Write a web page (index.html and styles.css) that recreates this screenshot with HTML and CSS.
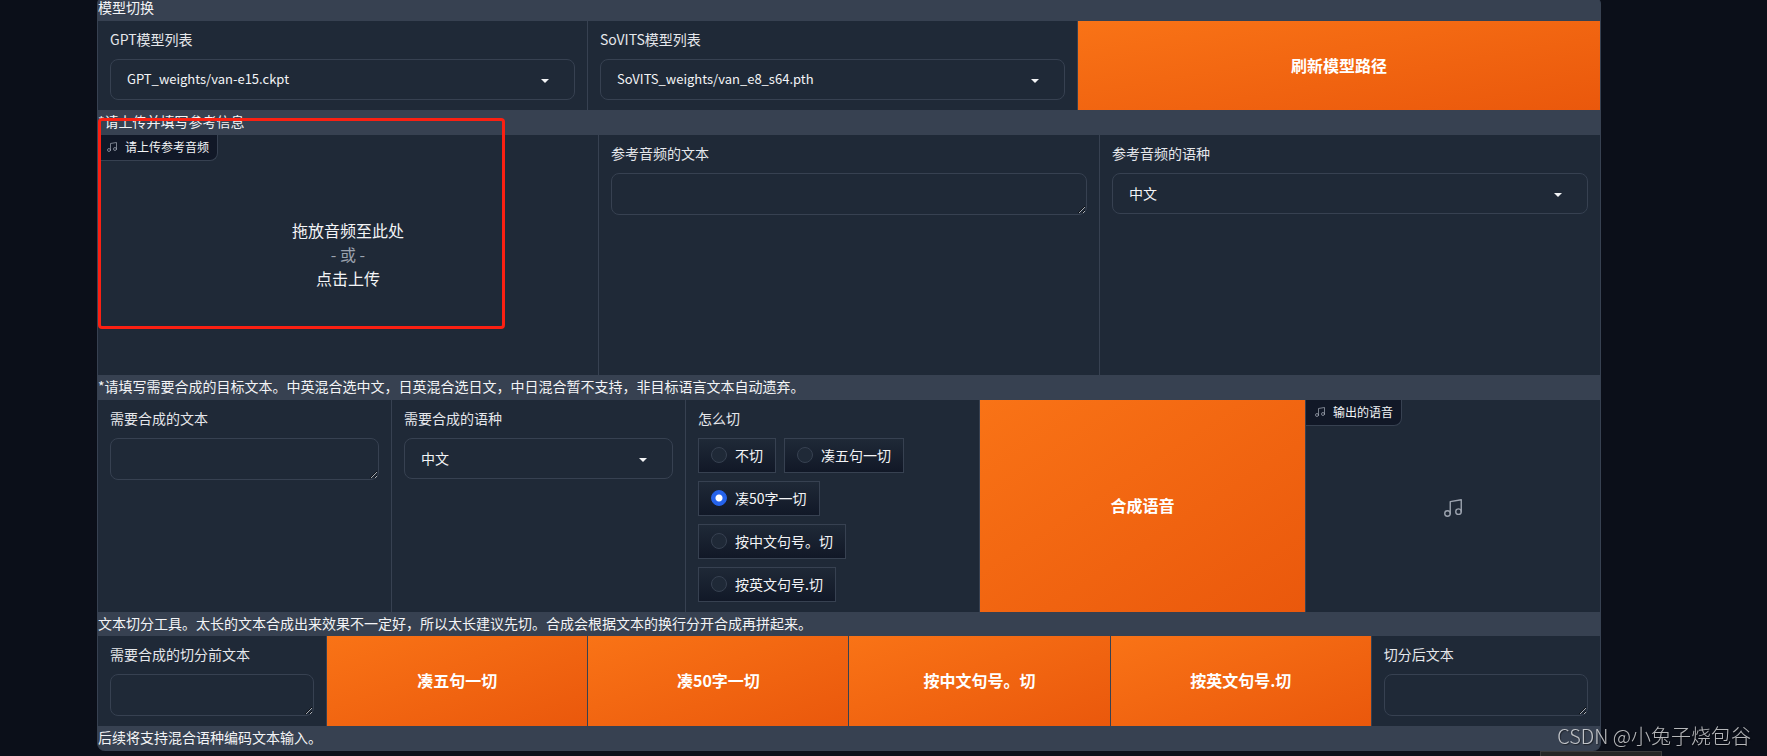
FILE: index.html
```html
<!DOCTYPE html>
<html lang="zh-CN">
<head>
<meta charset="utf-8">
<title>GPT-SoVITS</title>
<link rel="stylesheet" href="styles.css">
</head>
<body>
<svg class="symbols" aria-hidden="true">
  <symbol id="music" viewBox="0 0 24 24" fill="none" stroke="currentColor" stroke-width="1.5" stroke-linecap="round" stroke-linejoin="round">
    <path d="M9 18V5l12-2v13"/><circle cx="6" cy="18" r="3"/><circle cx="18" cy="16" r="3"/>
  </symbol>
  <symbol id="caret" viewBox="0 0 18 18" fill="currentColor"><path d="M5 8l4 4 4-4z"/></symbol>
</svg>

<main class="panel">
  <h2 class="heading">模型切换</h2>
  <section class="row row-models">
    <div class="block">
      <label class="label" for="gpt">GPT模型列表</label>
      <div class="select"><select id="gpt" class="field latin"><option>GPT_weights/van-e15.ckpt</option></select><svg class="caret"><use href="#caret"/></svg></div>
    </div>
    <div class="block">
      <label class="label" for="sovits">SoVITS模型列表</label>
      <div class="select"><select id="sovits" class="field latin"><option>SoVITS_weights/van_e8_s64.pth</option></select><svg class="caret"><use href="#caret"/></svg></div>
    </div>
    <button class="primary" type="button">刷新模型路径</button>
  </section>

  <h2 class="heading">*请上传并填写参考信息</h2>
  <section class="row row-reference">
    <div class="audio">
      <span class="badge"><svg class="badge-icon"><use href="#music"/></svg>请上传参考音频</span>
      <button class="drop" type="button"><span>拖放音频至此处</span><span class="or">- 或 -</span><span>点击上传</span></button>
      <div class="highlight"></div>
    </div>
    <div class="block">
      <label class="label" for="ref-text">参考音频的文本</label>
      <textarea id="ref-text" class="field" rows="1"></textarea>
    </div>
    <div class="block">
      <label class="label" for="ref-lang">参考音频的语种</label>
      <div class="select"><select id="ref-lang" class="field"><option>中文</option></select><svg class="caret"><use href="#caret"/></svg></div>
    </div>
  </section>

  <h2 class="heading">*请填写需要合成的目标文本。中英混合选中文，日英混合选日文，中日混合暂不支持，非目标语言文本自动遗弃。</h2>
  <section class="row row-synth">
    <div class="block">
      <label class="label" for="text">需要合成的文本</label>
      <textarea id="text" class="field" rows="1"></textarea>
    </div>
    <div class="block">
      <label class="label" for="lang">需要合成的语种</label>
      <div class="select"><select id="lang" class="field"><option>中文</option></select><svg class="caret"><use href="#caret"/></svg></div>
    </div>
    <fieldset class="block">
      <legend class="label">怎么切</legend>
      <div class="options">
        <label class="option"><input type="radio" name="cut">不切</label>
        <label class="option"><input type="radio" name="cut">凑五句一切</label>
        <label class="option"><input type="radio" name="cut" checked>凑50字一切</label>
        <label class="option"><input type="radio" name="cut">按中文句号。切</label>
        <label class="option"><input type="radio" name="cut">按英文句号.切</label>
      </div>
    </fieldset>
    <button class="primary" type="button">合成语音</button>
    <div class="audio">
      <span class="badge"><svg class="badge-icon"><use href="#music"/></svg>输出的语音</span>
      <svg class="empty-icon"><use href="#music"/></svg>
    </div>
  </section>

  <h2 class="heading heading-compact">文本切分工具。太长的文本合成出来效果不一定好，所以太长建议先切。合成会根据文本的换行分开合成再拼起来。</h2>
  <section class="row row-cut">
    <div class="block">
      <label class="label" for="before">需要合成的切分前文本</label>
      <textarea id="before" class="field" rows="1"></textarea>
    </div>
    <button class="primary" type="button">凑五句一切</button>
    <button class="primary" type="button">凑50字一切</button>
    <button class="primary" type="button">按中文句号。切</button>
    <button class="primary" type="button">按英文句号.切</button>
    <div class="block">
      <label class="label" for="after">切分后文本</label>
      <textarea id="after" class="field" rows="1"></textarea>
    </div>
  </section>
  <h2 class="heading">后续将支持混合语种编码文本输入。</h2>
</main>
<div class="status-tab"></div>
<div class="watermark">CSDN @小兔子烧包谷</div>
</body>
</html>
```

FILE: styles.css
```css
* { box-sizing: border-box; }

body {
  margin: 0;
  padding: 0 166px 0 97px;
  background: #0b0f19;
  color: #f3f4f6;
  color-scheme: dark;
  font-family: "Noto Sans CJK SC", sans-serif;
  font-size: 14px;
  line-height: 20px;
  overflow: hidden;
}

button, select, textarea { font: inherit; color: inherit; }

.symbols { display: none; }

.panel {
  margin-top: -4px;
  border: 1px solid #374151;
  border-width: 0 1px;
  border-radius: 8px;
  background: #374151;
  overflow: hidden;
}

.heading {
  margin: 0;
  padding-bottom: 2px;
  font-size: 14px;
  font-weight: 400;
  line-height: 23px;
}

.heading-compact { padding-bottom: 1px; }

.row { display: grid; gap: 1px; }
.row-models { grid-template-columns: 489fr 489fr 522fr; }
.row-reference { grid-template-columns: repeat(3, 1fr); min-height: 240px; }
.row-synth { grid-template-columns: 293fr 293fr 293fr 325fr 294fr; }
.row-cut { grid-template-columns: 228fr repeat(4, 260fr) 228fr; }

.block {
  margin: 0;
  border: 0;
  padding: 8px 12px 10px;
  min-width: 0;
  background: #1f2937;
}

.label {
  display: block;
  float: left;
  width: 100%;
  margin-bottom: 10px;
  padding: 0;
  color: #e5e7eb;
}

.select { position: relative; clear: both; }

.field {
  display: block;
  clear: both;
  width: 100%;
  border: 1px solid #374151;
  border-radius: 8px;
  background: #1f2937;
  padding: 0 16px 2px;
  outline: none;
}

select.field { height: 41px; appearance: none; }
textarea.field { height: 42px; padding: 10px; resize: vertical; }
select.latin { font-size: 13px; }

.caret {
  position: absolute;
  top: 12px;
  right: 21px;
  width: 18px;
  height: 18px;
  pointer-events: none;
}

.primary {
  border: 0;
  padding: 0 0 2px;
  background: linear-gradient(to bottom right, #f97316, #ea580c);
  color: #fff;
  font-size: 16px;
  font-weight: 600;
}

.audio {
  position: relative;
  display: grid;
  place-items: center;
  background: #1f2937;
}

.badge {
  position: absolute;
  top: 0;
  left: 0;
  display: flex;
  align-items: center;
  gap: 7px;
  height: 26px;
  padding: 0 8px 2px;
  border: 1px solid #374151;
  border-width: 0 1px 1px 0;
  border-radius: 0 0 8px 0;
  background: #111827;
  font-size: 12px;
}

.badge-icon { width: 12px; height: 12px; color: #9ca3af; }
.empty-icon { width: 22px; height: 22px; margin-top: 4px; color: #9ca3af; }

.drop {
  display: flex;
  flex-direction: column;
  justify-content: center;
  align-items: center;
  width: 100%;
  height: 100%;
  border: 0;
  padding: 0 0 2px;
  background: none;
  font-size: 16px;
  line-height: 24px;
}

.or { color: #9ca3af; }

.highlight {
  position: absolute;
  top: -17px;
  left: 0;
  width: 407px;
  height: 211px;
  border: 3px solid #fb2012;
  border-radius: 4px;
  pointer-events: none;
}

.options {
  display: flex;
  flex-wrap: wrap;
  gap: 8px;
  clear: both;
}

.option {
  display: flex;
  align-items: center;
  gap: 8px;
  height: 35px;
  padding: 0 12px 2px;
  border: 1px solid #374151;
  background: linear-gradient(to bottom, #1f2937, #111827);
}

.option input {
  appearance: none;
  width: 16px;
  height: 16px;
  margin: 0;
  border: 1px solid #374151;
  border-radius: 50%;
  background: #1f2937;
}

.option input:checked {
  border-color: #2563eb;
  background: radial-gradient(circle, #fff 3px, #2563eb 4px);
}

.status-tab {
  position: fixed;
  right: 105px;
  bottom: 0;
  width: 122px;
  height: 5px;
  border: 1px solid #3c3c3c;
  border-bottom: 0;
  background: #262626;
}

.watermark {
  position: fixed;
  right: 16px;
  bottom: 5px;
  color: rgba(255, 255, 255, 0.7);
  font-size: 20px;
  line-height: 30px;
  font-weight: 300;
  text-shadow: 1px 1px 1px rgba(0, 0, 0, 0.5);
}
```
